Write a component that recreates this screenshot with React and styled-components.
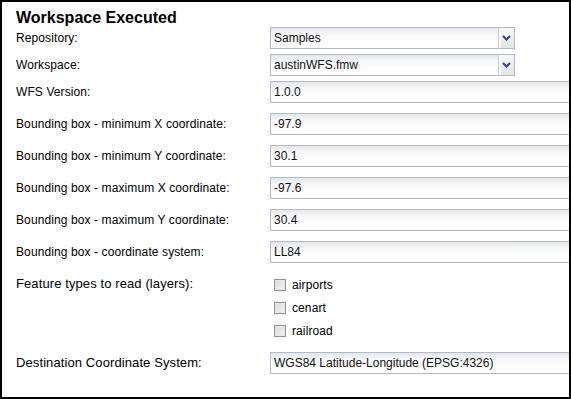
import React from 'react';
import styled, { createGlobalStyle } from 'styled-components';

const Global = createGlobalStyle`
  html, body { margin: 0; padding: 0; background: #fff; }
  body { font-family: "Liberation Sans", Arial, Helvetica, sans-serif; }
`;

const Frame = styled.div`
  box-sizing: border-box;
  width: 571px;
  height: 399px;
  border: 2px solid #000;
  overflow: hidden;
  padding: 7px 0 0 14px;
  background: #fff;
`;

const Title = styled.h1`
  margin: 0;
  font-size: 16px;
  line-height: 18px;
  font-weight: bold;
  color: #000;
`;

const Row = styled.div`
  display: flex;
  align-items: flex-start;
  height: ${(p) => p.$h}px;
`;

const Label = styled.div`
  width: 254px;
  flex: none;
  font-size: ${(p) => (p.$wide ? 13 : 12)}px;
  letter-spacing: 0.1px;
  line-height: 22px;
  color: #000;
  white-space: nowrap;
`;

const TextField = styled.input`
  box-sizing: border-box;
  width: ${(p) => p.$w || 330}px;
  height: 22px;
  margin: 0;
  padding: 0 3px;
  flex: none;
  border: 1px solid #b5b8c8;
  background: linear-gradient(to bottom, #e4e7ec 0, #f6f7f9 6px, #fff 14px);
  font-family: "Liberation Sans", Arial, sans-serif;
  font-size: 12px;
  color: #111;
  outline: none;
`;

const Combo = styled.div`
  display: flex;
  width: 245px;
  height: 22px;
  flex: none;
`;

const ComboInput = styled(TextField)`
  flex: 1;
  width: auto;
  border-right: none;
`;

const Trigger = styled.div`
  box-sizing: border-box;
  width: 17px;
  height: 22px;
  flex: none;
  border: 1px solid #b5b8c8;
  border-left-color: #c9ccd6;
  background: linear-gradient(to right, #fbfbfb 0, #fbfbfb 2px, transparent 2px),
    linear-gradient(to bottom, #f7f7f7, #e4e5e8);
  display: flex;
  align-items: center;
  justify-content: center;
`;

const Checks = styled.div`
  display: flex;
  flex-direction: column;
  padding-left: 4px;
`;

const CheckItem = styled.label`
  display: flex;
  align-items: center;
  height: 23px;
  font-size: 12px;
  letter-spacing: 0.1px;
  color: #000;
`;

const Box = styled.span`
  box-sizing: border-box;
  width: 12px;
  height: 12px;
  margin-right: 6px;
  border: 1px solid #8e8f8f;
  background: linear-gradient(135deg, #d9d9d9, #f4f4f4);
  box-shadow: inset 0 0 0 1px #e8e8e8;
`;

const Arrow = () => (
  <svg width="9" height="6" viewBox="0 0 9 6">
    <path d="M1 1 L4.5 4.5 L8 1" fill="none" stroke="#2f4f8c" strokeWidth="2.2" />
  </svg>
);

const ComboField = ({ value }) => (
  <Combo>
    <ComboInput readOnly value={value} />
    <Trigger>
      <Arrow />
    </Trigger>
  </Combo>
);

const textRows = [
  ['WFS Version:', '1.0.0'],
  ['Bounding box - minimum X coordinate:', '-97.9'],
  ['Bounding box - minimum Y coordinate:', '30.1'],
  ['Bounding box - maximum X coordinate:', '-97.6'],
  ['Bounding box - maximum Y coordinate:', '30.4'],
  ['Bounding box - coordinate system:', 'LL84'],
];

export default function App() {
  return (
    <>
      <Global />
      <Frame>
        <Title>Workspace Executed</Title>
        <Row $h={27}>
          <Label>Repository:</Label>
          <ComboField value="Samples" />
        </Row>
        <Row $h={27}>
          <Label>Workspace:</Label>
          <ComboField value="austinWFS.fmw" />
        </Row>
        {textRows.map(([l, v]) => (
          <Row $h={32} key={l}>
            <Label>{l}</Label>
            <TextField readOnly value={v} />
          </Row>
        ))}
        <Row $h={79}>
          <Label $wide>Feature types to read (layers):</Label>
          <Checks>
            {['airports', 'cenart', 'railroad'].map((n) => (
              <CheckItem key={n}>
                <Box />
                {n}
              </CheckItem>
            ))}
          </Checks>
        </Row>
        <Row $h={32}>
          <Label $wide>Destination Coordinate System:</Label>
          <TextField readOnly value="WGS84 Latitude-Longitude (EPSG:4326)" />
        </Row>
      </Frame>
    </>
  );
}
